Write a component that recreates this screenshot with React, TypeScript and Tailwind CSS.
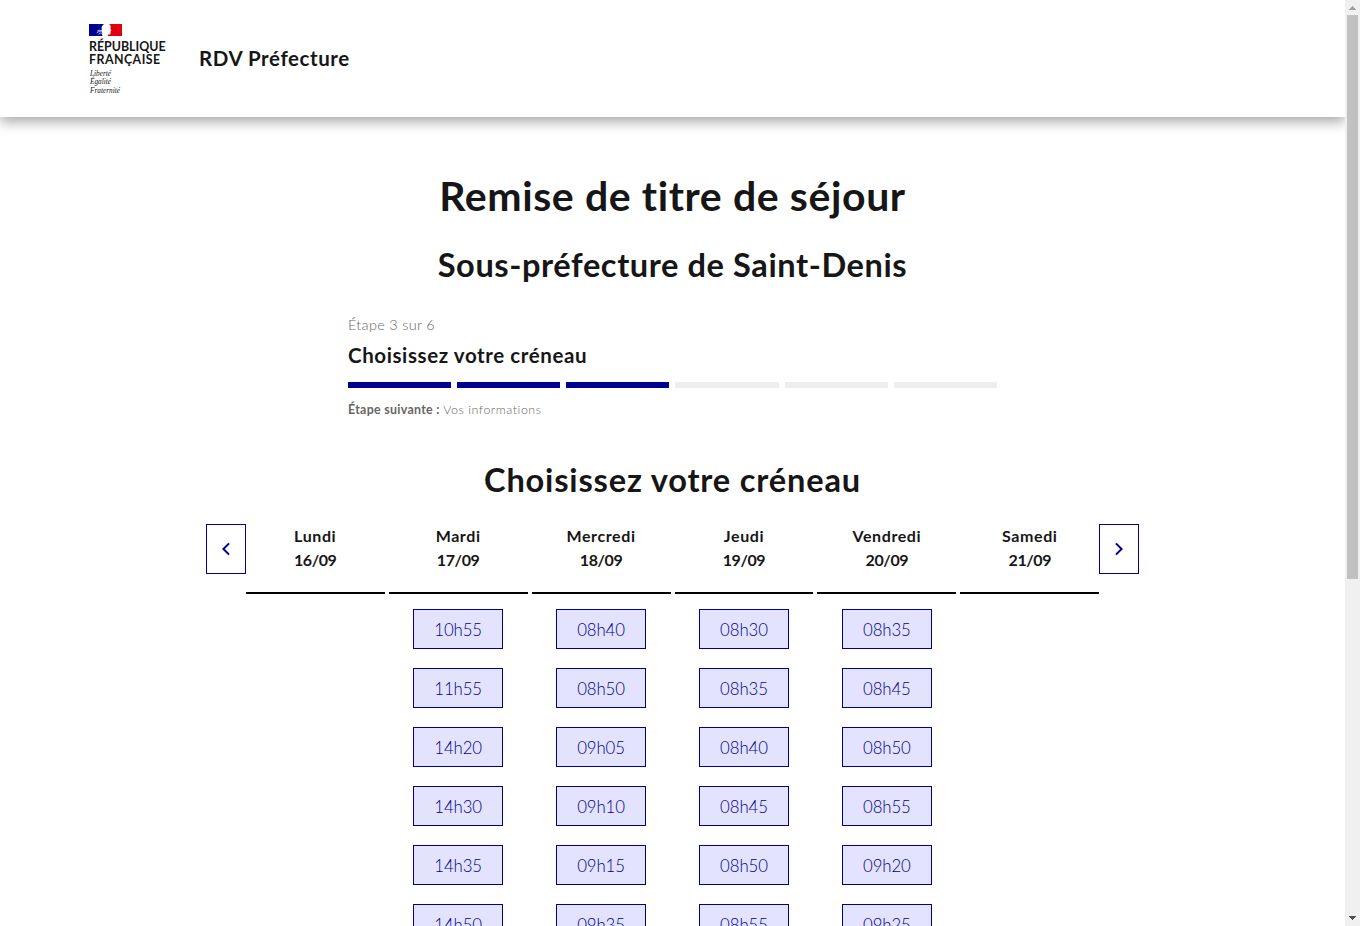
type Day = { name: string; date: string; slots: string[] };

const days: Day[] = [
  { name: "Lundi", date: "16/09", slots: [] },
  { name: "Mardi", date: "17/09", slots: ["10h55", "11h55", "14h20", "14h30", "14h35", "14h50"] },
  { name: "Mercredi", date: "18/09", slots: ["08h40", "08h50", "09h05", "09h10", "09h15", "09h35"] },
  { name: "Jeudi", date: "19/09", slots: ["08h30", "08h35", "08h40", "08h45", "08h50", "08h55"] },
  { name: "Vendredi", date: "20/09", slots: ["08h35", "08h45", "08h50", "08h55", "09h20", "09h25"] },
  { name: "Samedi", date: "21/09", slots: [] },
];

function Flag() {
  return (
    <svg width="33" height="12" viewBox="0 0 33 12" className="block">
      <path fill="#000091" d="M0 0h15.200C13.600.8 12.800 2.400 12.500 4c.5 1 .3 2-.2 3 1 1 1.400 2.500.6 3.600L13.500 12H0z" />
      <path fill="#e1000f" d="M20 0h13v12H18.800c-.3-1.200.4-1.700 1.800-1.500 1-.1.9-.8.8-1.400l.3-1.200-.2-1 .9-.6-1-1.500.2-1.600C22 2 21.300.8 20 0z" />
      <path stroke="#fff" strokeWidth=".7" fill="none" d="M8 7.200l2-1 2.500.4M7.800 9l2-1.400 3 .2M9.500 10.400l2-1.300 2 .3" />
    </svg>
  );
}

function Header() {
  return (
    <header className="flex h-[117px] shrink-0 items-start bg-white pl-[89px] pt-6 shadow-[0_5px_12px_rgba(0,0,0,0.34)]">
      <div className="w-[110px]">
        <Flag />
        <div className="mt-1 whitespace-nowrap text-[12.4px] font-bold leading-[13px]">
          <p>RÉPUBLIQUE</p>
          <p className="tracking-[0.45px]">FRANÇAISE</p>
        </div>
        <p className="mt-1 pl-px font-['Liberation_Serif',serif] text-[7.3px] italic leading-[8.3px]">
          Liberté
          <br />
          Égalité
          <br />
          Fraternité
        </p>
      </div>
      <p className="mt-5 text-[20.5px] font-bold leading-7 tracking-[0.57px]">RDV Préfecture</p>
    </header>
  );
}

function Stepper() {
  return (
    <div className="mx-auto w-[649px]">
      <p className="text-[14.5px] font-light leading-6 tracking-[0.3px] text-[#666]">Étape 3 sur 6</p>
      <h2 className="mt-1 text-[20.5px] font-bold leading-7 tracking-[0.6px]">Choisissez votre créneau</h2>
      <div className="mt-[13px] grid grid-cols-6 gap-1.5">
        {[1, 2, 3, 4, 5, 6].map((step) => (
          <div key={step} className={step <= 3 ? "h-1.5 bg-[#000091]" : "h-1.5 bg-[#eee]"} />
        ))}
      </div>
      <p className="mt-3 text-[12.4px] font-light leading-5 tracking-[0.55px] text-[#666]">
        <span className="font-bold tracking-[0.3px]">Étape suivante :</span> Vos informations
      </p>
    </div>
  );
}

function WeekButton({ label, path }: { label: string; path: string }) {
  return (
    <button aria-label={label} className="flex h-[50px] w-10 shrink-0 items-center justify-center border border-[#000091]">
      <svg className="shrink-0" width="24" height="24" viewBox="0 0 24 24" fill="#000091">
        <path d={path} />
      </svg>
    </button>
  );
}

function DayColumn({ day }: { day: Day }) {
  return (
    <div className="text-center">
      <div className="h-[70px] border-b-2 border-black text-base font-bold leading-6">
        <p className="tracking-[0.6px]">{day.name}</p>
        <p className="tracking-[-0.4px]">{day.date}</p>
      </div>
      <div className="mt-[15px] flex flex-col items-center gap-[19px]">
        {day.slots.map((slot) => (
          <button
            key={slot}
            className="h-10 w-[90px] border border-[#000091] bg-[#e3e3fd] pt-0.5 text-[16.8px] font-light tracking-[-0.1px] text-[#000091]"
          >
            {slot}
          </button>
        ))}
      </div>
    </div>
  );
}

function Scrollbar() {
  return (
    <div className="flex w-[15px] shrink-0 flex-col items-center bg-[#f0f0f0]">
      <svg width="15" height="15" viewBox="0 0 15 15" shapeRendering="crispEdges">
        <path fill="#a0a0a0" d="M7 6h1v1h1v1h1v1h1v1H4V9h1V8h1V7h1z" />
      </svg>
      <div className="h-[564px] w-[11px] bg-[#c1c1c1]" />
      <svg className="mt-auto" width="15" height="15" viewBox="0 0 15 15" shapeRendering="crispEdges">
        <path fill="#505050" d="M4 5h7v1h-1v1H9v1H8v1H7V8H6V7H5V6H4z" />
      </svg>
    </div>
  );
}

export default function App() {
  return (
    <div className="flex h-[926px] w-[1360px] overflow-hidden bg-white font-[Lato,sans-serif] text-[#161616]">
      <div className="flex w-[1345px] flex-col overflow-hidden">
        <Header />
        <main>
          <h1 className="mt-[55px] text-center text-[41px] font-bold leading-[48px] tracking-[0.6px]">Remise de titre de séjour</h1>
          <h2 className="mb-7 mt-[25px] text-center text-[32.6px] font-bold leading-10 tracking-[0.58px]">Sous-préfecture de Saint-Denis</h2>
          <Stepper />
          <h2 className="mt-10 text-center text-[32.6px] font-bold leading-10 tracking-[0.82px]">Choisissez votre créneau</h2>
          <div className="mx-auto mt-6 flex w-[933.5px] items-start">
            <WeekButton label="Semaine précédente" path="M10.828 12l4.950 4.950-1.414 1.414L8 12l6.364-6.364 1.414 1.414z" />
            <div className="grid grow grid-cols-6 gap-1">
              {days.map((day) => (
                <DayColumn key={day.name} day={day} />
              ))}
            </div>
            <WeekButton label="Semaine suivante" path="M13.172 12L8.222 7.050l1.414-1.414L16 12l-6.364 6.364-1.414-1.414z" />
          </div>
        </main>
      </div>
      <Scrollbar />
    </div>
  );
}
